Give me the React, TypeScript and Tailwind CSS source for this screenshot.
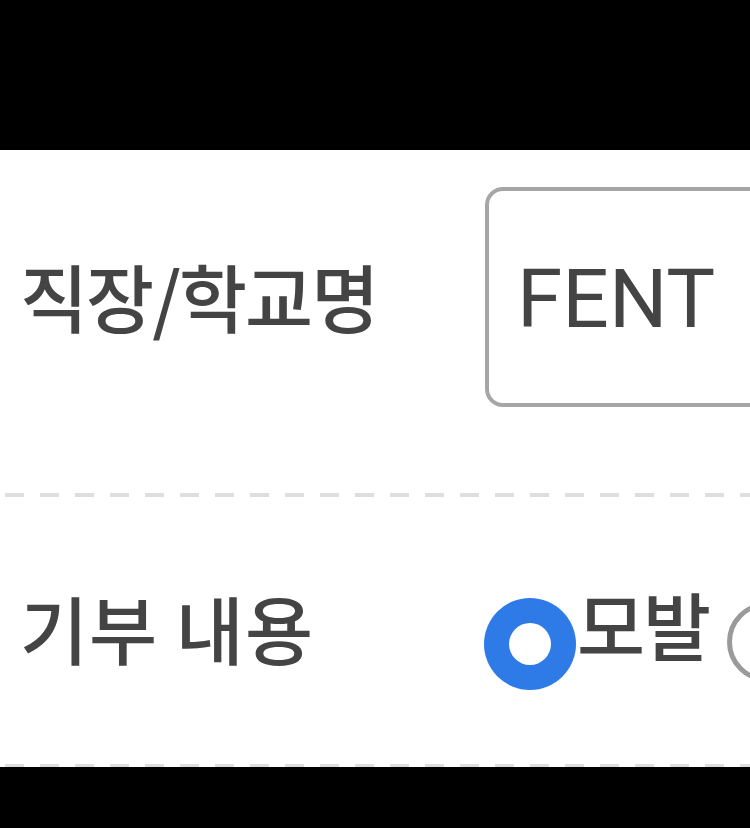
import React from "react";

const ko = { fontFamily: '"Noto Sans CJK KR", "Noto Sans", sans-serif' };

function Dashed({ h }: { h: string }) {
  return (
    <div
      className={
        h +
        " w-full shrink-0 bg-[repeating-linear-gradient(90deg,transparent_0px,transparent_5px,#dedede_5px,#dedede_24px,transparent_24px,transparent_35px)]"
      }
    />
  );
}

export default function App() {
  return (
    <div className="w-[750px] h-[828px] bg-white overflow-hidden flex flex-col">
      <div className="h-[150px] bg-black shrink-0" />
      <div className="h-[343px] shrink-0 flex items-start pt-[37px]">
        <div className="w-[485px] shrink-0 h-[220px] flex items-center pl-[20px]">
          <span
            className="text-[74px] leading-none font-medium text-[#444] tracking-[-2px] -mt-[4px] whitespace-nowrap"
            style={ko}
          >
            직장/학교명
          </span>
        </div>
        <div className="w-[320px] shrink-0 h-[220px] border-[4px] border-[#a6a6a6] rounded-[18px] flex items-center pl-[28px]">
          <span
            className="text-[82px] leading-none text-[#444] mt-[4px]"
            style={{ fontFamily: 'Roboto, "Liberation Sans", sans-serif' }}
          >
            FENT
          </span>
        </div>
      </div>
      <Dashed h="h-[4px]" />
      <div className="h-[267px] shrink-0 flex items-start pt-[101px]">
        <div className="w-[484px] shrink-0 pl-[20px]">
          <span
            className="text-[74px] leading-none font-medium text-[#444] tracking-[1px] whitespace-nowrap block -mt-[8px]"
            style={ko}
          >
            기부 내용
          </span>
        </div>
        <div className="flex items-start whitespace-nowrap shrink-0">
          <div className="w-[92px] h-[92px] rounded-full bg-[#2e7be8] flex items-center justify-center shrink-0">
            <div className="w-[42px] h-[42px] rounded-full bg-white" />
          </div>
          <span
            className="text-[74px] leading-none font-medium text-[#444] tracking-[-2px] -mt-[12px] ml-[1px] whitespace-nowrap"
            style={ko}
          >
            모발
          </span>
          <div className="w-[80px] h-[80px] rounded-full border-[5px] border-[#9a9a9a] shrink-0 ml-[18px] mt-[4px]" />
        </div>
      </div>
      <Dashed h="h-[3px]" />
      <div className="flex-1 bg-black" />
    </div>
  );
}
